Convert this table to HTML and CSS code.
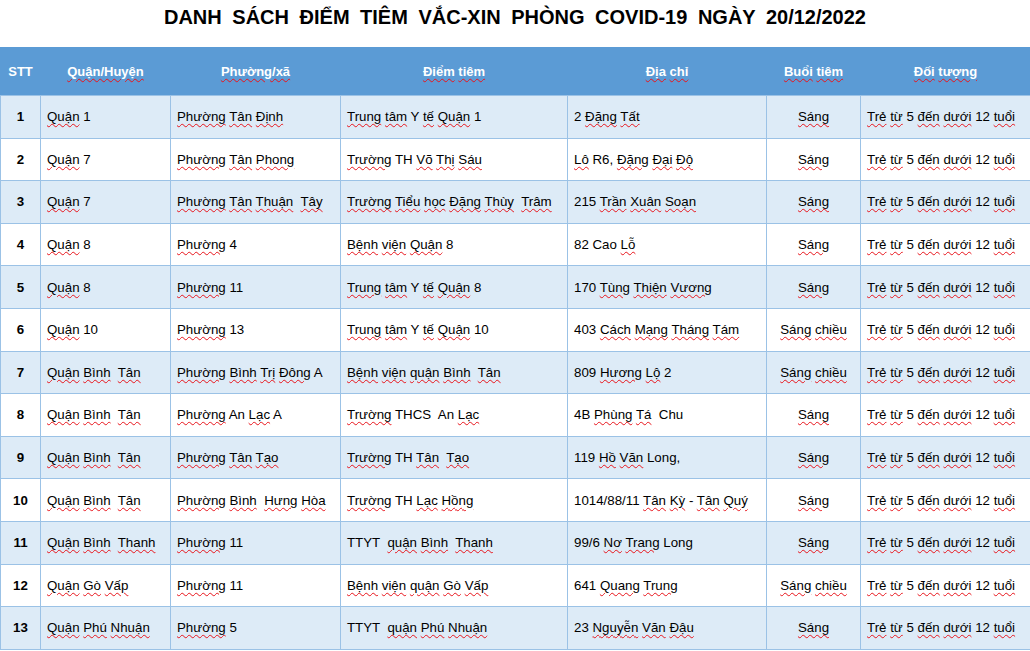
FILE: index.html
```html
<!DOCTYPE html>
<html lang="vi">
<head>
<meta charset="utf-8">
<title>Danh sách điểm tiêm vắc-xin</title>
<link rel="stylesheet" href="styles.css">
</head>
<body>
<h1 class="title">DANH SÁCH ĐIỂM TIÊM VẮC-XIN PHÒNG COVID-19 NGÀY 20/12/2022</h1>
<table class="list">
<colgroup>
<col class="c1"><col class="c2"><col class="c3"><col class="c4"><col class="c5"><col class="c6"><col class="c7">
</colgroup>
<thead>
<tr>
<th>STT</th>
<th><span class="sp">Quận/Huyện</span></th>
<th><span class="sp">Phường/xã</span></th>
<th><span class="sp">Điểm</span> <span class="sp">tiêm</span></th>
<th><span class="sp">Địa</span> <span class="sp">chỉ</span></th>
<th><span class="sp">Buổi</span> <span class="sp">tiêm</span></th>
<th><span class="sp">Đối</span> <span class="sp">tượng</span></th>
</tr>
</thead>
<tbody>
<tr class="alt">
<td class="no">1</td>
<td><span class="sp">Quận</span> 1</td>
<td><span class="sp">Phường</span> <span class="sp">Tân</span> <span class="sp">Định</span></td>
<td><span class="sp">Trung</span> <span class="sp">tâm</span> Y <span class="sp">tế</span> <span class="sp">Quận</span> 1</td>
<td>2 <span class="sp">Đặng</span> <span class="sp">Tất</span></td>
<td class="ses"><span class="sp">Sáng</span></td>
<td><span class="sp">Trẻ</span> <span class="sp">từ</span> 5 <span class="sp">đến</span> <span class="sp">dưới</span> 12 <span class="sp">tuổi</span></td>
</tr>
<tr>
<td class="no">2</td>
<td><span class="sp">Quận</span> 7</td>
<td><span class="sp">Phường</span> <span class="sp">Tân</span> <span class="sp">Phong</span></td>
<td><span class="sp">Trường</span> TH <span class="sp">Võ</span> <span class="sp">Thị</span> <span class="sp">Sáu</span></td>
<td><span class="sp">Lô</span> R6, <span class="sp">Đặng</span> <span class="sp">Đại</span> <span class="sp">Độ</span></td>
<td class="ses"><span class="sp">Sáng</span></td>
<td><span class="sp">Trẻ</span> <span class="sp">từ</span> 5 <span class="sp">đến</span> <span class="sp">dưới</span> 12 <span class="sp">tuổi</span></td>
</tr>
<tr class="alt">
<td class="no">3</td>
<td><span class="sp">Quận</span> 7</td>
<td><span class="sp">Phường</span> <span class="sp">Tân</span> <span class="sp">Thuận</span>  <span class="sp">Tây</span></td>
<td><span class="sp">Trường</span> <span class="sp">Tiểu</span> <span class="sp">học</span> <span class="sp">Đặng</span> <span class="sp">Thùy</span>  <span class="sp">Trâm</span></td>
<td>215 <span class="sp">Trần</span> <span class="sp">Xuân</span> <span class="sp">Soạn</span></td>
<td class="ses"><span class="sp">Sáng</span></td>
<td><span class="sp">Trẻ</span> <span class="sp">từ</span> 5 <span class="sp">đến</span> <span class="sp">dưới</span> 12 <span class="sp">tuổi</span></td>
</tr>
<tr>
<td class="no">4</td>
<td><span class="sp">Quận</span> 8</td>
<td><span class="sp">Phường</span> 4</td>
<td><span class="sp">Bệnh</span> <span class="sp">viện</span> <span class="sp">Quận</span> 8</td>
<td>82 Cao <span class="sp">Lỗ</span></td>
<td class="ses"><span class="sp">Sáng</span></td>
<td><span class="sp">Trẻ</span> <span class="sp">từ</span> 5 <span class="sp">đến</span> <span class="sp">dưới</span> 12 <span class="sp">tuổi</span></td>
</tr>
<tr class="alt">
<td class="no">5</td>
<td><span class="sp">Quận</span> 8</td>
<td><span class="sp">Phường</span> 11</td>
<td><span class="sp">Trung</span> <span class="sp">tâm</span> Y <span class="sp">tế</span> <span class="sp">Quận</span> 8</td>
<td>170 <span class="sp">Tùng</span> <span class="sp">Thiện</span> <span class="sp">Vương</span></td>
<td class="ses"><span class="sp">Sáng</span></td>
<td><span class="sp">Trẻ</span> <span class="sp">từ</span> 5 <span class="sp">đến</span> <span class="sp">dưới</span> 12 <span class="sp">tuổi</span></td>
</tr>
<tr>
<td class="no">6</td>
<td><span class="sp">Quận</span> 10</td>
<td><span class="sp">Phường</span> 13</td>
<td><span class="sp">Trung</span> <span class="sp">tâm</span> Y <span class="sp">tế</span> <span class="sp">Quận</span> 10</td>
<td>403 <span class="sp">Cách</span> <span class="sp">Mạng</span> <span class="sp">Tháng</span> <span class="sp">Tám</span></td>
<td class="ses"><span class="sp">Sáng</span> <span class="sp">chiều</span></td>
<td><span class="sp">Trẻ</span> <span class="sp">từ</span> 5 <span class="sp">đến</span> <span class="sp">dưới</span> 12 <span class="sp">tuổi</span></td>
</tr>
<tr class="alt">
<td class="no">7</td>
<td><span class="sp">Quận</span> <span class="sp">Bình</span>  <span class="sp">Tân</span></td>
<td><span class="sp">Phường</span> <span class="sp">Bình</span> <span class="sp">Trị</span> <span class="sp">Đông</span> A</td>
<td><span class="sp">Bệnh</span> <span class="sp">viện</span> <span class="sp">quận</span> <span class="sp">Bình</span>  <span class="sp">Tân</span></td>
<td>809 <span class="sp">Hương</span> <span class="sp">Lộ</span> 2</td>
<td class="ses"><span class="sp">Sáng</span> <span class="sp">chiều</span></td>
<td><span class="sp">Trẻ</span> <span class="sp">từ</span> 5 <span class="sp">đến</span> <span class="sp">dưới</span> 12 <span class="sp">tuổi</span></td>
</tr>
<tr>
<td class="no">8</td>
<td><span class="sp">Quận</span> <span class="sp">Bình</span>  <span class="sp">Tân</span></td>
<td><span class="sp">Phường</span> An <span class="sp">Lạc</span> A</td>
<td><span class="sp">Trường</span> THCS  An <span class="sp">Lạc</span></td>
<td>4B <span class="sp">Phùng</span> <span class="sp">Tá</span>  Chu</td>
<td class="ses"><span class="sp">Sáng</span></td>
<td><span class="sp">Trẻ</span> <span class="sp">từ</span> 5 <span class="sp">đến</span> <span class="sp">dưới</span> 12 <span class="sp">tuổi</span></td>
</tr>
<tr class="alt">
<td class="no">9</td>
<td><span class="sp">Quận</span> <span class="sp">Bình</span>  <span class="sp">Tân</span></td>
<td><span class="sp">Phường</span> <span class="sp">Tân</span> <span class="sp">Tạo</span></td>
<td><span class="sp">Trường</span> TH <span class="sp">Tân</span>  <span class="sp">Tạo</span></td>
<td>119 <span class="sp">Hồ</span> <span class="sp">Văn</span> Long,</td>
<td class="ses"><span class="sp">Sáng</span></td>
<td><span class="sp">Trẻ</span> <span class="sp">từ</span> 5 <span class="sp">đến</span> <span class="sp">dưới</span> 12 <span class="sp">tuổi</span></td>
</tr>
<tr>
<td class="no">10</td>
<td><span class="sp">Quận</span> <span class="sp">Bình</span>  <span class="sp">Tân</span></td>
<td><span class="sp">Phường</span> <span class="sp">Bình</span>  <span class="sp">Hưng</span> <span class="sp">Hòa</span></td>
<td><span class="sp">Trường</span> TH <span class="sp">Lạc</span> <span class="sp">Hồng</span></td>
<td>1014/88/11 <span class="sp">Tân</span> <span class="sp">Kỳ</span> - <span class="sp">Tân</span> <span class="sp">Quý</span></td>
<td class="ses"><span class="sp">Sáng</span></td>
<td><span class="sp">Trẻ</span> <span class="sp">từ</span> 5 <span class="sp">đến</span> <span class="sp">dưới</span> 12 <span class="sp">tuổi</span></td>
</tr>
<tr class="alt">
<td class="no">11</td>
<td><span class="sp">Quận</span> <span class="sp">Bình</span>  <span class="sp">Thanh</span></td>
<td><span class="sp">Phường</span> 11</td>
<td>TTYT  <span class="sp">quận</span> <span class="sp">Bình</span>  <span class="sp">Thanh</span></td>
<td>99/6 <span class="sp">Nơ</span> <span class="sp">Trang</span> Long</td>
<td class="ses"><span class="sp">Sáng</span></td>
<td><span class="sp">Trẻ</span> <span class="sp">từ</span> 5 <span class="sp">đến</span> <span class="sp">dưới</span> 12 <span class="sp">tuổi</span></td>
</tr>
<tr>
<td class="no">12</td>
<td><span class="sp">Quận</span> <span class="sp">Gò</span> <span class="sp">Vấp</span></td>
<td><span class="sp">Phường</span> 11</td>
<td><span class="sp">Bệnh</span> <span class="sp">viện</span> <span class="sp">quận</span> <span class="sp">Gò</span> <span class="sp">Vấp</span></td>
<td>641 <span class="sp">Quang</span> <span class="sp">Trung</span></td>
<td class="ses"><span class="sp">Sáng</span> <span class="sp">chiều</span></td>
<td><span class="sp">Trẻ</span> <span class="sp">từ</span> 5 <span class="sp">đến</span> <span class="sp">dưới</span> 12 <span class="sp">tuổi</span></td>
</tr>
<tr class="alt">
<td class="no">13</td>
<td><span class="sp">Quận</span> <span class="sp">Phú</span> <span class="sp">Nhuận</span></td>
<td><span class="sp">Phường</span> 5</td>
<td>TTYT  <span class="sp">quận</span> <span class="sp">Phú</span> <span class="sp">Nhuận</span></td>
<td>23 <span class="sp">Nguyễn</span> <span class="sp">Văn</span> <span class="sp">Đậu</span></td>
<td class="ses"><span class="sp">Sáng</span></td>
<td><span class="sp">Trẻ</span> <span class="sp">từ</span> 5 <span class="sp">đến</span> <span class="sp">dưới</span> 12 <span class="sp">tuổi</span></td>
</tr>
</tbody>
</table>
</body>
</html>
```

FILE: styles.css
```css
html, body {
  margin: 0;
  padding: 0;
  background: #ffffff;
}

body {
  font-family: "Liberation Sans", Arial, sans-serif;
  color: #000000;
}

.title {
  margin: 0;
  height: 47px;
  box-sizing: border-box;
  padding-top: 5px;
  line-height: 24px;
  text-align: center;
  font-size: 20px;
  font-weight: bold;
  word-spacing: 5px;
  color: #000000;
}

.list {
  width: 1030px;
  border-collapse: collapse;
  table-layout: fixed;
  font-size: 13.3px;
}

.c1 { width: 40px; }
.c2 { width: 130px; }
.c3 { width: 170px; }
.c4 { width: 227px; }
.c5 { width: 199px; }
.c6 { width: 94px; }
.c7 { width: 170px; }

.list th {
  background: #5b9bd5;
  color: #ffffff;
  font-weight: bold;
  font-size: 13px;
  height: 47px;
  padding: 0;
  text-align: center;
  border: 1px solid #5b9bd5;
  border-bottom-color: #9bc2e6;
}

.list td {
  height: 41.6px;
  padding: 0 6px;
  border: 1px solid #9bc2e6;
  white-space: pre;
  overflow: hidden;
  background: #ffffff;
}

.list tr.alt td {
  background: #ddebf7;
}

.list td.no {
  text-align: center;
  font-weight: bold;
  padding: 0;
}

.list td.ses {
  text-align: center;
  padding: 0;
}

.sp {
  text-decoration: underline wavy #e8141b;
  text-decoration-thickness: 1px;
  text-underline-offset: 2px;
}
```
